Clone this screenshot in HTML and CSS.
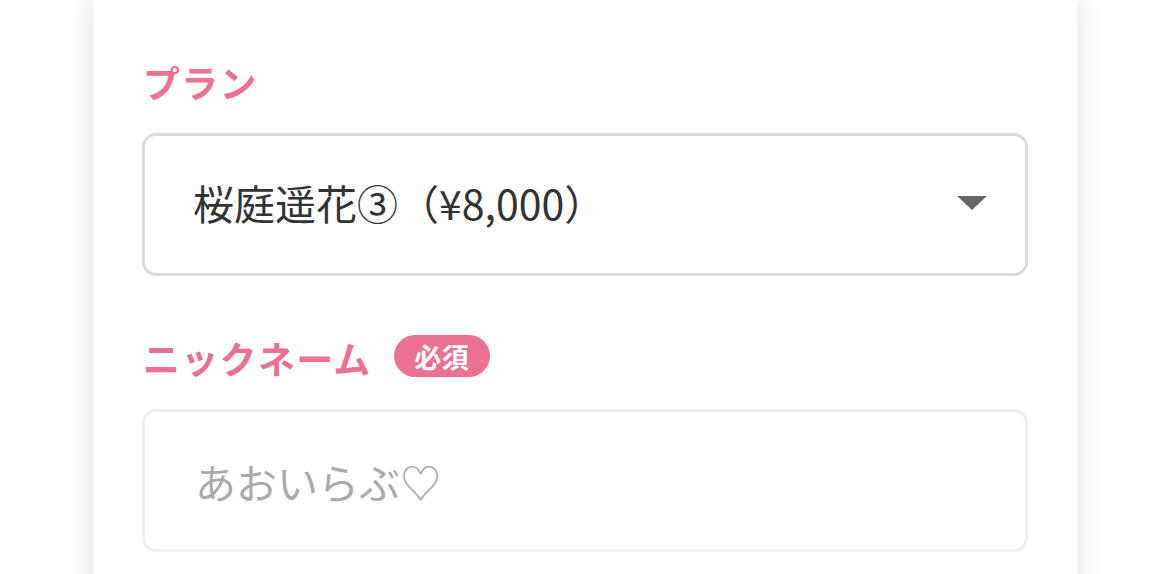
FILE: index.html
```html
<!DOCTYPE html>
<html lang="ja">
<head>
  <meta charset="UTF-8" />
  <title>申し込みフォーム</title>
  <link rel="stylesheet" href="styles.css">
</head>
<body>
  <div class="form-card">
    <form id="orderForm">
      <!-- Plan -->
      <div class="field">
        <label class="field-label" for="plan">プラン</label>
        <div class="select-wrap">
          <select id="plan" class="select-input">
            <option>桜庭遥花③（¥8,000）</option>
          </select>
        </div>
      </div>

      <!-- Nickname -->
      <div class="field">
        <label class="field-label" for="nickname">
          ニックネーム
          <span class="required-badge">必須</span>
        </label>
        <input type="text" id="nickname" class="text-input" placeholder="あおいらぶ♡" required />
      </div>
    </form>
  </div>
</body>
</html>
```

FILE: styles.css
```css
/* Basic Reset & Body */
* {
  margin: 0;
  padding: 0;
  box-sizing: border-box;
}
body {
  font-family: "Noto Sans CJK JP", "Noto Sans", sans-serif;
  background: #fff;
  color: #333;
  height: 100vh;
  overflow: hidden;
}

/* Card */
.form-card {
  width: 984px;
  margin-left: 93px;
  min-height: 800px;
  background: #fff;
  padding: 56px 49px 0;
  box-shadow: 0 0 26px rgba(0,0,0,0.13);
}

/* Fields */
form {
  display: flex;
  flex-direction: column;
  gap: 56px;
}
.field {
  display: flex;
  flex-direction: column;
  gap: 26px;
}
.field-label {
  display: flex;
  align-items: center;
  gap: 22px;
  height: 51px;
  padding-left: 1px;
  font-size: 37px;
  font-weight: 700;
  letter-spacing: 0.035em;
  color: #eb7192;
}
.required-badge {
  display: inline-flex;
  align-items: center;
  justify-content: center;
  width: 96px;
  height: 42px;
  margin-top: -3px;
  border-radius: 21px;
  background: #eb7192;
  color: #fff;
  font-size: 27px;
  letter-spacing: 0.02em;
}

/* Select */
.select-wrap {
  position: relative;
}
.select-wrap::after {
  content: "";
  position: absolute;
  right: 41px;
  top: 63px;
  border-left: 15px solid transparent;
  border-right: 15px solid transparent;
  border-top: 14px solid #666;
  pointer-events: none;
}
.select-input {
  appearance: none;
  -webkit-appearance: none;
  width: 100%;
  height: 143px;
  padding: 0 90px 6px 48px;
  border: 3px solid #dcdcdc;
  border-radius: 14px;
  background: #fff;
  font-family: inherit;
  font-size: 41px;
  color: #333;
  outline: none;
}

/* Text input */
.text-input {
  width: 100%;
  height: 143px;
  padding: 0 48px 0 50px;
  border: 3px solid #efefef;
  border-radius: 14px;
  background: #fff;
  font-family: inherit;
  font-size: 41px;
  color: #333;
  outline: none;
}
.text-input::placeholder {
  color: #aaa;
}
```
